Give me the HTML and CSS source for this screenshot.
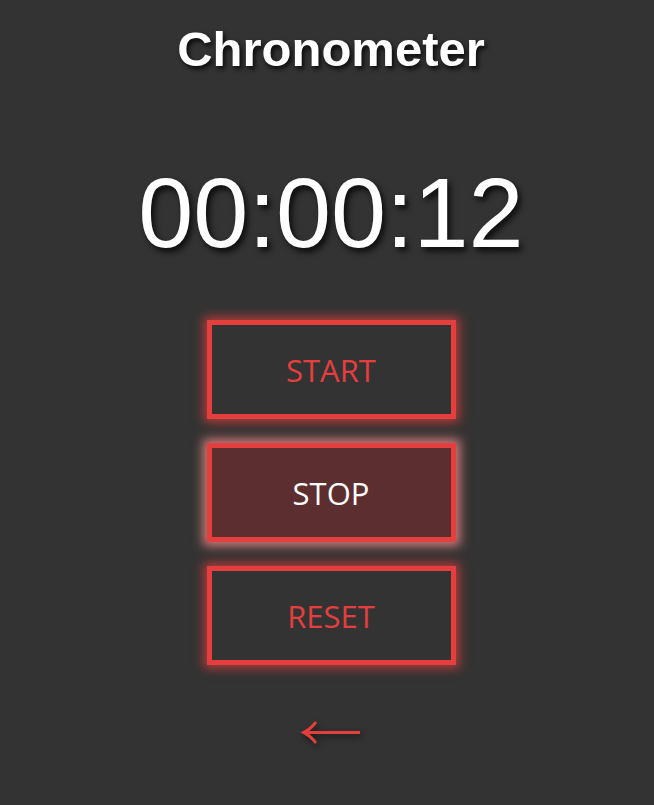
FILE: index.html
```html
<!DOCTYPE html>
<html>
<head>
<meta charset="utf-8">
<link rel="stylesheet" href="styles.css">
</head>
<body>
<main class="app">
  <h1 class="title">Chronometer</h1>
  <div class="time">00:00:12</div>
  <div class="buttons">
    <button class="btn">START</button>
    <button class="btn btn-active">STOP</button>
    <button class="btn">RESET</button>
  </div>
  <a class="back" href="#" aria-label="Back">
    <svg width="62" height="26" viewBox="0 0 62 26">
      <path d="M3 12.5 H60" stroke="#e53e3e" stroke-width="3" fill="none"/>
      <path d="M0.5 12.5 C6 10 11 6 15 1 L17 3 C14 7 10.5 10.5 7 12.5 C10.5 14.5 14 18 17 22 L15 24 C11 19 6 15 0.5 12.5 Z" fill="#e53e3e"/>
    </svg>
  </a>
</main>
</body>
</html>
```
FILE: styles.css
```css
html, body {
  margin: 0;
  padding: 0;
  background: #333333;
}
.app {
  display: flex;
  flex-direction: column;
  align-items: center;
  min-height: 805px;
  padding-left: 8px;
}
.title {
  margin: 21px 0 0 0;
  font-family: "Liberation Sans", Arial, sans-serif;
  font-weight: bold;
  font-size: 49px;
  line-height: 56px;
  color: #ffffff;
  text-shadow: 2px 3px 5px rgba(0, 0, 0, 0.85);
}
.time {
  margin-top: 80px;
  font-family: "Liberation Sans", Arial, sans-serif;
  font-size: 99px;
  line-height: 112px;
  color: #ffffff;
  text-shadow: 3px 4px 6px rgba(0, 0, 0, 0.8);
}
.buttons {
  margin-top: 51px;
  display: flex;
  flex-direction: column;
  gap: 24px;
}
.btn {
  width: 249px;
  height: 99px;
  box-sizing: border-box;
  border: 5px solid #e53e3e;
  background: #333333;
  color: #e53e3e;
  font-family: "Open Sans", "Noto Sans", sans-serif;
  font-size: 31px;
  padding: 0;
  box-shadow: 0 0 10px 3px rgba(229, 62, 62, 0.75);
  cursor: pointer;
}
.btn-active {
  background: #5c2e30;
  color: #ffffff;
  box-shadow: 0 0 10px 4px rgba(248, 140, 140, 0.8);
}
.back {
  margin-top: 55px;
  display: block;
  line-height: 0;
  filter: drop-shadow(2px 3px 3px rgba(0, 0, 0, 0.6));
}
```
